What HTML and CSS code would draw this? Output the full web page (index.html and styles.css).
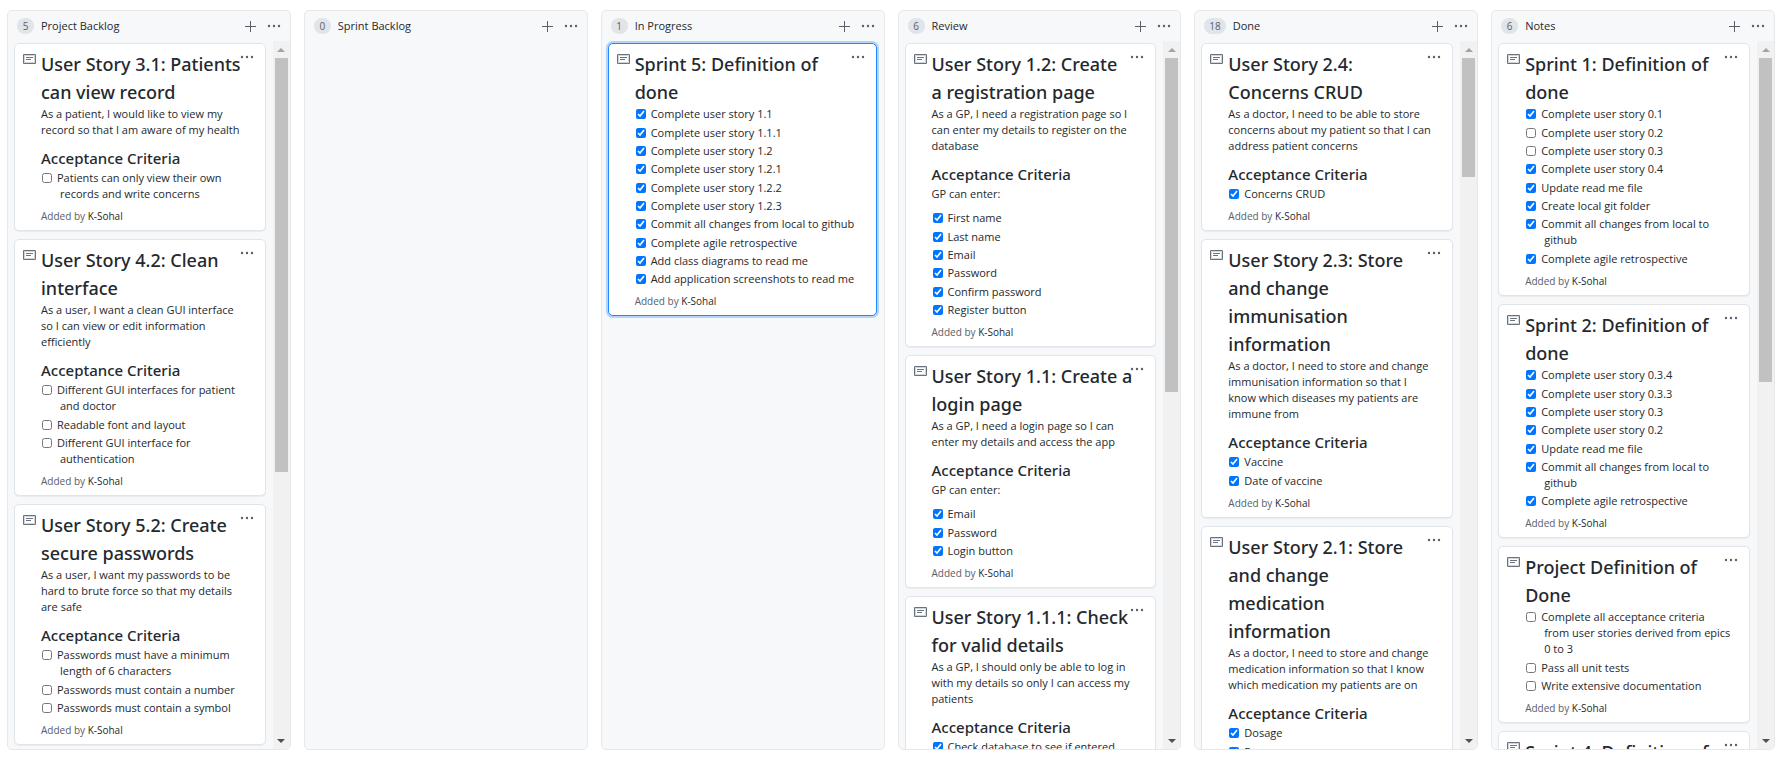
FILE: index.html
```
<!DOCTYPE html>
<html lang="en">
<head>
<meta charset="utf-8">
<title>Project board</title>
<link rel="stylesheet" href="styles.css">
</head>
<body>
<svg class="sprite" aria-hidden="true">
  <symbol id="note" viewBox="0 0 13 11"><path fill="none" stroke="currentColor" d="M.5.5h12v9H.5zM3 3.5h7M3 5.5h5"/><path fill="none" stroke="currentColor" stroke-opacity=".3" d="M1.5 1.5h10v7h-10z"/></symbol>
  <symbol id="plus" viewBox="0 0 11 11"><path fill="none" stroke="currentColor" d="M5.5 0v11M0 5.5h11"/></symbol>
  <symbol id="dots" viewBox="0 0 14 4"><circle cx="2" cy="2" r="1.2"/><circle cx="7" cy="2" r="1.2"/><circle cx="12" cy="2" r="1.2"/></symbol>
</svg>
<main class="board">

  <section class="column">
    <header class="column-header">
      <span class="count">5</span><h2 class="column-title">Project Backlog</h2>
      <button class="icon-button" aria-label="Add note"><svg class="plus"><use href="#plus"/></svg></button>
      <button class="icon-button" aria-label="Column menu"><svg class="dots"><use href="#dots"/></svg></button>
    </header>
    <div class="column-body">
      <div class="cards">
        <article class="card">
          <svg class="note"><use href="#note"/></svg>
          <button class="card-menu" aria-label="Card menu"><svg class="dots"><use href="#dots"/></svg></button>
          <div class="content">
            <h3 class="title">User Story 3.1: Patients<br>can view record</h3>
            <p class="text">As a patient, I would like to view my<br>record so that I am aware of my health</p>
            <h4 class="subtitle">Acceptance Criteria</h4>
            <ul class="tasks">
              <li><label><input type="checkbox">Patients can only view their own<br>records and write concerns</label></li>
            </ul>
            <p class="author">Added by <a href="#">K-Sohal</a></p>
          </div>
        </article>
        <article class="card">
          <svg class="note"><use href="#note"/></svg>
          <button class="card-menu" aria-label="Card menu"><svg class="dots"><use href="#dots"/></svg></button>
          <div class="content">
            <h3 class="title">User Story 4.2: Clean<br>interface</h3>
            <p class="text">As a user, I want a clean GUI interface<br>so I can view or edit information<br>efficiently</p>
            <h4 class="subtitle">Acceptance Criteria</h4>
            <ul class="tasks">
              <li><label><input type="checkbox">Different GUI interfaces for patient<br>and doctor</label></li>
              <li><label><input type="checkbox">Readable font and layout</label></li>
              <li><label><input type="checkbox">Different GUI interface for<br>authentication</label></li>
            </ul>
            <p class="author">Added by <a href="#">K-Sohal</a></p>
          </div>
        </article>
        <article class="card">
          <svg class="note"><use href="#note"/></svg>
          <button class="card-menu" aria-label="Card menu"><svg class="dots"><use href="#dots"/></svg></button>
          <div class="content">
            <h3 class="title">User Story 5.2: Create<br>secure passwords</h3>
            <p class="text">As a user, I want my passwords to be<br>hard to brute force so that my details<br>are safe</p>
            <h4 class="subtitle">Acceptance Criteria</h4>
            <ul class="tasks">
              <li><label><input type="checkbox">Passwords must have a minimum<br>length of 6 characters</label></li>
              <li><label><input type="checkbox">Passwords must contain a number</label></li>
              <li><label><input type="checkbox">Passwords must contain a symbol</label></li>
            </ul>
            <p class="author">Added by <a href="#">K-Sohal</a></p>
          </div>
        </article>
      </div>
      <div class="scrollbar"><i class="arrow-up"></i><div class="track"><div class="thumb" style="height:61.4%"></div></div><i class="arrow-down"></i></div>
    </div>
  </section>

  <section class="column">
    <header class="column-header">
      <span class="count">0</span><h2 class="column-title">Sprint Backlog</h2>
      <button class="icon-button" aria-label="Add note"><svg class="plus"><use href="#plus"/></svg></button>
      <button class="icon-button" aria-label="Column menu"><svg class="dots"><use href="#dots"/></svg></button>
    </header>
  </section>

  <section class="column">
    <header class="column-header">
      <span class="count">1</span><h2 class="column-title">In Progress</h2>
      <button class="icon-button" aria-label="Add note"><svg class="plus"><use href="#plus"/></svg></button>
      <button class="icon-button" aria-label="Column menu"><svg class="dots"><use href="#dots"/></svg></button>
    </header>
    <div class="column-body">
      <div class="cards">
        <article class="card selected">
          <svg class="note"><use href="#note"/></svg>
          <button class="card-menu" aria-label="Card menu"><svg class="dots"><use href="#dots"/></svg></button>
          <div class="content">
            <h3 class="title">Sprint 5: Definition of<br>done</h3>
            <ul class="tasks">
              <li><label><input type="checkbox" checked>Complete user story 1.1</label></li>
              <li><label><input type="checkbox" checked>Complete user story 1.1.1</label></li>
              <li><label><input type="checkbox" checked>Complete user story 1.2</label></li>
              <li><label><input type="checkbox" checked>Complete user story 1.2.1</label></li>
              <li><label><input type="checkbox" checked>Complete user story 1.2.2</label></li>
              <li><label><input type="checkbox" checked>Complete user story 1.2.3</label></li>
              <li><label><input type="checkbox" checked>Commit all changes from local to github</label></li>
              <li><label><input type="checkbox" checked>Complete agile retrospective</label></li>
              <li><label><input type="checkbox" checked>Add class diagrams to read me</label></li>
              <li><label><input type="checkbox" checked>Add application screenshots to read me</label></li>
            </ul>
            <p class="author">Added by <a href="#">K-Sohal</a></p>
          </div>
        </article>
      </div>
    </div>
  </section>

  <section class="column">
    <header class="column-header">
      <span class="count">6</span><h2 class="column-title">Review</h2>
      <button class="icon-button" aria-label="Add note"><svg class="plus"><use href="#plus"/></svg></button>
      <button class="icon-button" aria-label="Column menu"><svg class="dots"><use href="#dots"/></svg></button>
    </header>
    <div class="column-body">
      <div class="cards">
        <article class="card">
          <svg class="note"><use href="#note"/></svg>
          <button class="card-menu" aria-label="Card menu"><svg class="dots"><use href="#dots"/></svg></button>
          <div class="content">
            <h3 class="title">User Story 1.2: Create<br>a registration page</h3>
            <p class="text">As a GP, I need a registration page so I<br>can enter my details to register on the<br>database</p>
            <h4 class="subtitle">Acceptance Criteria</h4>
            <p class="text lead">GP can enter:</p>
            <ul class="tasks">
              <li><label><input type="checkbox" checked>First name</label></li>
              <li><label><input type="checkbox" checked>Last name</label></li>
              <li><label><input type="checkbox" checked>Email</label></li>
              <li><label><input type="checkbox" checked>Password</label></li>
              <li><label><input type="checkbox" checked>Confirm password</label></li>
              <li><label><input type="checkbox" checked>Register button</label></li>
            </ul>
            <p class="author">Added by <a href="#">K-Sohal</a></p>
          </div>
        </article>
        <article class="card">
          <svg class="note"><use href="#note"/></svg>
          <button class="card-menu" aria-label="Card menu"><svg class="dots"><use href="#dots"/></svg></button>
          <div class="content">
            <h3 class="title">User Story 1.1: Create a<br>login page</h3>
            <p class="text">As a GP, I need a login page so I can<br>enter my details and access the app</p>
            <h4 class="subtitle">Acceptance Criteria</h4>
            <p class="text lead">GP can enter:</p>
            <ul class="tasks">
              <li><label><input type="checkbox" checked>Email</label></li>
              <li><label><input type="checkbox" checked>Password</label></li>
              <li><label><input type="checkbox" checked>Login button</label></li>
            </ul>
            <p class="author">Added by <a href="#">K-Sohal</a></p>
          </div>
        </article>
        <article class="card">
          <svg class="note"><use href="#note"/></svg>
          <button class="card-menu" aria-label="Card menu"><svg class="dots"><use href="#dots"/></svg></button>
          <div class="content">
            <h3 class="title">User Story 1.1.1: Check<br>for valid details</h3>
            <p class="text">As a GP, I should only be able to log in<br>with my details so only I can access my<br>patients</p>
            <h4 class="subtitle">Acceptance Criteria</h4>
            <ul class="tasks">
              <li><label><input type="checkbox" checked>Check database to see if entered</label></li>
            </ul>
          </div>
        </article>
      </div>
      <div class="scrollbar"><i class="arrow-up"></i><div class="track"><div class="thumb" style="height:49.6%"></div></div><i class="arrow-down"></i></div>
    </div>
  </section>

  <section class="column">
    <header class="column-header">
      <span class="count">18</span><h2 class="column-title">Done</h2>
      <button class="icon-button" aria-label="Add note"><svg class="plus"><use href="#plus"/></svg></button>
      <button class="icon-button" aria-label="Column menu"><svg class="dots"><use href="#dots"/></svg></button>
    </header>
    <div class="column-body">
      <div class="cards">
        <article class="card">
          <svg class="note"><use href="#note"/></svg>
          <button class="card-menu" aria-label="Card menu"><svg class="dots"><use href="#dots"/></svg></button>
          <div class="content">
            <h3 class="title">User Story 2.4:<br>Concerns CRUD</h3>
            <p class="text">As a doctor, I need to be able to store<br>concerns about my patient so that I can<br>address patient concerns</p>
            <h4 class="subtitle">Acceptance Criteria</h4>
            <ul class="tasks">
              <li><label><input type="checkbox" checked>Concerns CRUD</label></li>
            </ul>
            <p class="author">Added by <a href="#">K-Sohal</a></p>
          </div>
        </article>
        <article class="card">
          <svg class="note"><use href="#note"/></svg>
          <button class="card-menu" aria-label="Card menu"><svg class="dots"><use href="#dots"/></svg></button>
          <div class="content">
            <h3 class="title">User Story 2.3: Store<br>and change<br>immunisation<br>information</h3>
            <p class="text">As a doctor, I need to store and change<br>immunisation information so that I<br>know which diseases my patients are<br>immune from</p>
            <h4 class="subtitle">Acceptance Criteria</h4>
            <ul class="tasks">
              <li><label><input type="checkbox" checked>Vaccine</label></li>
              <li><label><input type="checkbox" checked>Date of vaccine</label></li>
            </ul>
            <p class="author">Added by <a href="#">K-Sohal</a></p>
          </div>
        </article>
        <article class="card">
          <svg class="note"><use href="#note"/></svg>
          <button class="card-menu" aria-label="Card menu"><svg class="dots"><use href="#dots"/></svg></button>
          <div class="content">
            <h3 class="title">User Story 2.1: Store<br>and change<br>medication<br>information</h3>
            <p class="text">As a doctor, I need to store and change<br>medication information so that I know<br>which medication my patients are on</p>
            <h4 class="subtitle">Acceptance Criteria</h4>
            <ul class="tasks">
              <li><label><input type="checkbox" checked>Dosage</label></li>
              <li><label><input type="checkbox" checked>Frequency</label></li>
            </ul>
          </div>
        </article>
      </div>
      <div class="scrollbar"><i class="arrow-up"></i><div class="track"><div class="thumb" style="height:17.7%"></div></div><i class="arrow-down"></i></div>
    </div>
  </section>

  <section class="column">
    <header class="column-header">
      <span class="count">6</span><h2 class="column-title">Notes</h2>
      <button class="icon-button" aria-label="Add note"><svg class="plus"><use href="#plus"/></svg></button>
      <button class="icon-button" aria-label="Column menu"><svg class="dots"><use href="#dots"/></svg></button>
    </header>
    <div class="column-body">
      <div class="cards">
        <article class="card">
          <svg class="note"><use href="#note"/></svg>
          <button class="card-menu" aria-label="Card menu"><svg class="dots"><use href="#dots"/></svg></button>
          <div class="content">
            <h3 class="title">Sprint 1: Definition of<br>done</h3>
            <ul class="tasks">
              <li><label><input type="checkbox" checked>Complete user story 0.1</label></li>
              <li><label><input type="checkbox">Complete user story 0.2</label></li>
              <li><label><input type="checkbox">Complete user story 0.3</label></li>
              <li><label><input type="checkbox" checked>Complete user story 0.4</label></li>
              <li><label><input type="checkbox" checked>Update read me file</label></li>
              <li><label><input type="checkbox" checked>Create local git folder</label></li>
              <li><label><input type="checkbox" checked>Commit all changes from local to<br>github</label></li>
              <li><label><input type="checkbox" checked>Complete agile retrospective</label></li>
            </ul>
            <p class="author">Added by <a href="#">K-Sohal</a></p>
          </div>
        </article>
        <article class="card">
          <svg class="note"><use href="#note"/></svg>
          <button class="card-menu" aria-label="Card menu"><svg class="dots"><use href="#dots"/></svg></button>
          <div class="content">
            <h3 class="title">Sprint 2: Definition of<br>done</h3>
            <ul class="tasks">
              <li><label><input type="checkbox" checked>Complete user story 0.3.4</label></li>
              <li><label><input type="checkbox" checked>Complete user story 0.3.3</label></li>
              <li><label><input type="checkbox" checked>Complete user story 0.3</label></li>
              <li><label><input type="checkbox" checked>Complete user story 0.2</label></li>
              <li><label><input type="checkbox" checked>Update read me file</label></li>
              <li><label><input type="checkbox" checked>Commit all changes from local to<br>github</label></li>
              <li><label><input type="checkbox" checked>Complete agile retrospective</label></li>
            </ul>
            <p class="author">Added by <a href="#">K-Sohal</a></p>
          </div>
        </article>
        <article class="card">
          <svg class="note"><use href="#note"/></svg>
          <button class="card-menu" aria-label="Card menu"><svg class="dots"><use href="#dots"/></svg></button>
          <div class="content">
            <h3 class="title">Project Definition of<br>Done</h3>
            <ul class="tasks">
              <li><label><input type="checkbox">Complete all acceptance criteria<br>from user stories derived from epics<br>0 to 3</label></li>
              <li><label><input type="checkbox">Pass all unit tests</label></li>
              <li><label><input type="checkbox">Write extensive documentation</label></li>
            </ul>
            <p class="author">Added by <a href="#">K-Sohal</a></p>
          </div>
        </article>
        <article class="card">
          <svg class="note"><use href="#note"/></svg>
          <button class="card-menu" aria-label="Card menu"><svg class="dots"><use href="#dots"/></svg></button>
          <div class="content">
            <h3 class="title">Sprint 4: Definition of</h3>
          </div>
        </article>
      </div>
      <div class="scrollbar"><i class="arrow-up"></i><div class="track"><div class="thumb" style="height:48.1%"></div></div><i class="arrow-down"></i></div>
    </div>
  </section>

</main>
</body>
</html>
```
FILE: styles.css
```
* { box-sizing: border-box; }

body {
  margin: 0;
  background: #fff;
  color: #24292e;
  font-family: "Open Sans", "Noto Sans", sans-serif;
  font-size: 11px;
  line-height: 16px;
}

h2, h3, h4, p, ul { margin: 0; padding: 0; }

.sprite { display: none; }

.board {
  display: grid;
  grid-template-columns: repeat(6, minmax(0, 1fr));
  gap: 13px;
  height: 100vh;
  padding: 10px 7px 11px;
}

.column {
  display: flex;
  flex-direction: column;
  min-height: 0;
  background: #f6f8fa;
  border: 1px solid #e6e9ec;
  border-radius: 5px;
  overflow: hidden;
}

.column-header {
  display: flex;
  align-items: center;
  flex: none;
  height: 30px;
  padding: 0 9px;
}

.count {
  min-width: 17px;
  margin-right: 7px;
  padding: 0 5px;
  border-radius: 8px;
  background: #e1e4e8;
  color: #586069;
  font-size: 10px;
  text-align: center;
}

.column-title {
  flex: 1;
  font-size: 11px;
  font-weight: 500;
}

button {
  display: flex;
  padding: 0;
  border: 0;
  background: none;
  color: #586069;
  cursor: pointer;
}

.icon-button + .icon-button { margin-left: 11px; }

.plus { width: 11px; height: 11px; }
.dots { width: 14px; height: 4px; fill: currentColor; }

.column-body {
  display: flex;
  flex: 1;
  min-height: 0;
}

.cards {
  display: flex;
  flex: 1;
  flex-direction: column;
  gap: 8px;
  min-width: 0;
  padding: 2px 7px 0 6px;
}

.card {
  position: relative;
  display: flex;
  flex: none;
  gap: 5px;
  padding: 6px 8px;
  background: #fff;
  border: 1px solid #e1e4e8;
  border-radius: 5px;
  box-shadow: 0 1px 1px rgba(27, 31, 35, .06);
}

.selected {
  border-color: #2188ff;
  box-shadow: 0 0 0 2px #b3d3f8;
}

.note {
  flex: none;
  width: 13px;
  height: 11px;
  margin-top: 4px;
  color: #6a737d;
}

.card-menu {
  position: absolute;
  top: 11px;
  right: 11px;
}

.content {
  flex: 1;
  min-width: 0;
  white-space: nowrap;
}

.title {
  font-family: "Noto Sans", "Open Sans", sans-serif;
  font-size: 18px;
  font-weight: 500;
  line-height: 28px;
}

.subtitle {
  margin: 10px 0 2px;
  font-family: "Noto Sans", "Open Sans", sans-serif;
  font-size: 15px;
  font-weight: 500;
  line-height: 20px;
}

.lead { margin-bottom: 8px; }

.tasks {
  list-style: none;
  padding-left: 19px;
}

.tasks li + li { margin-top: 2px; }
.tasks li:nth-child(3n + 2) { margin-top: 3px; }

.tasks input {
  width: 10px;
  height: 10px;
  margin: 0 5px 0 -18px;
  vertical-align: -1px;
}

.author {
  margin-top: 6px;
  color: #586069;
  font-size: 10px;
}

.author a {
  color: #24292e;
  text-decoration: none;
}

.scrollbar {
  display: flex;
  flex: none;
  flex-direction: column;
  width: 17px;
  background: #f1f1f1;
}

.track {
  flex: 1;
  padding: 0 2px;
}

.thumb { background: #c1c1c1; }

.arrow-up, .arrow-down {
  display: flex;
  align-items: center;
  justify-content: center;
  height: 17px;
}

.arrow-up::before, .arrow-down::before {
  content: "";
  border: 4px solid transparent;
}

.arrow-up::before {
  border-top: 0;
  border-bottom-color: #a3a3a3;
}

.arrow-down::before {
  border-bottom: 0;
  border-top-color: #505050;
}
```
